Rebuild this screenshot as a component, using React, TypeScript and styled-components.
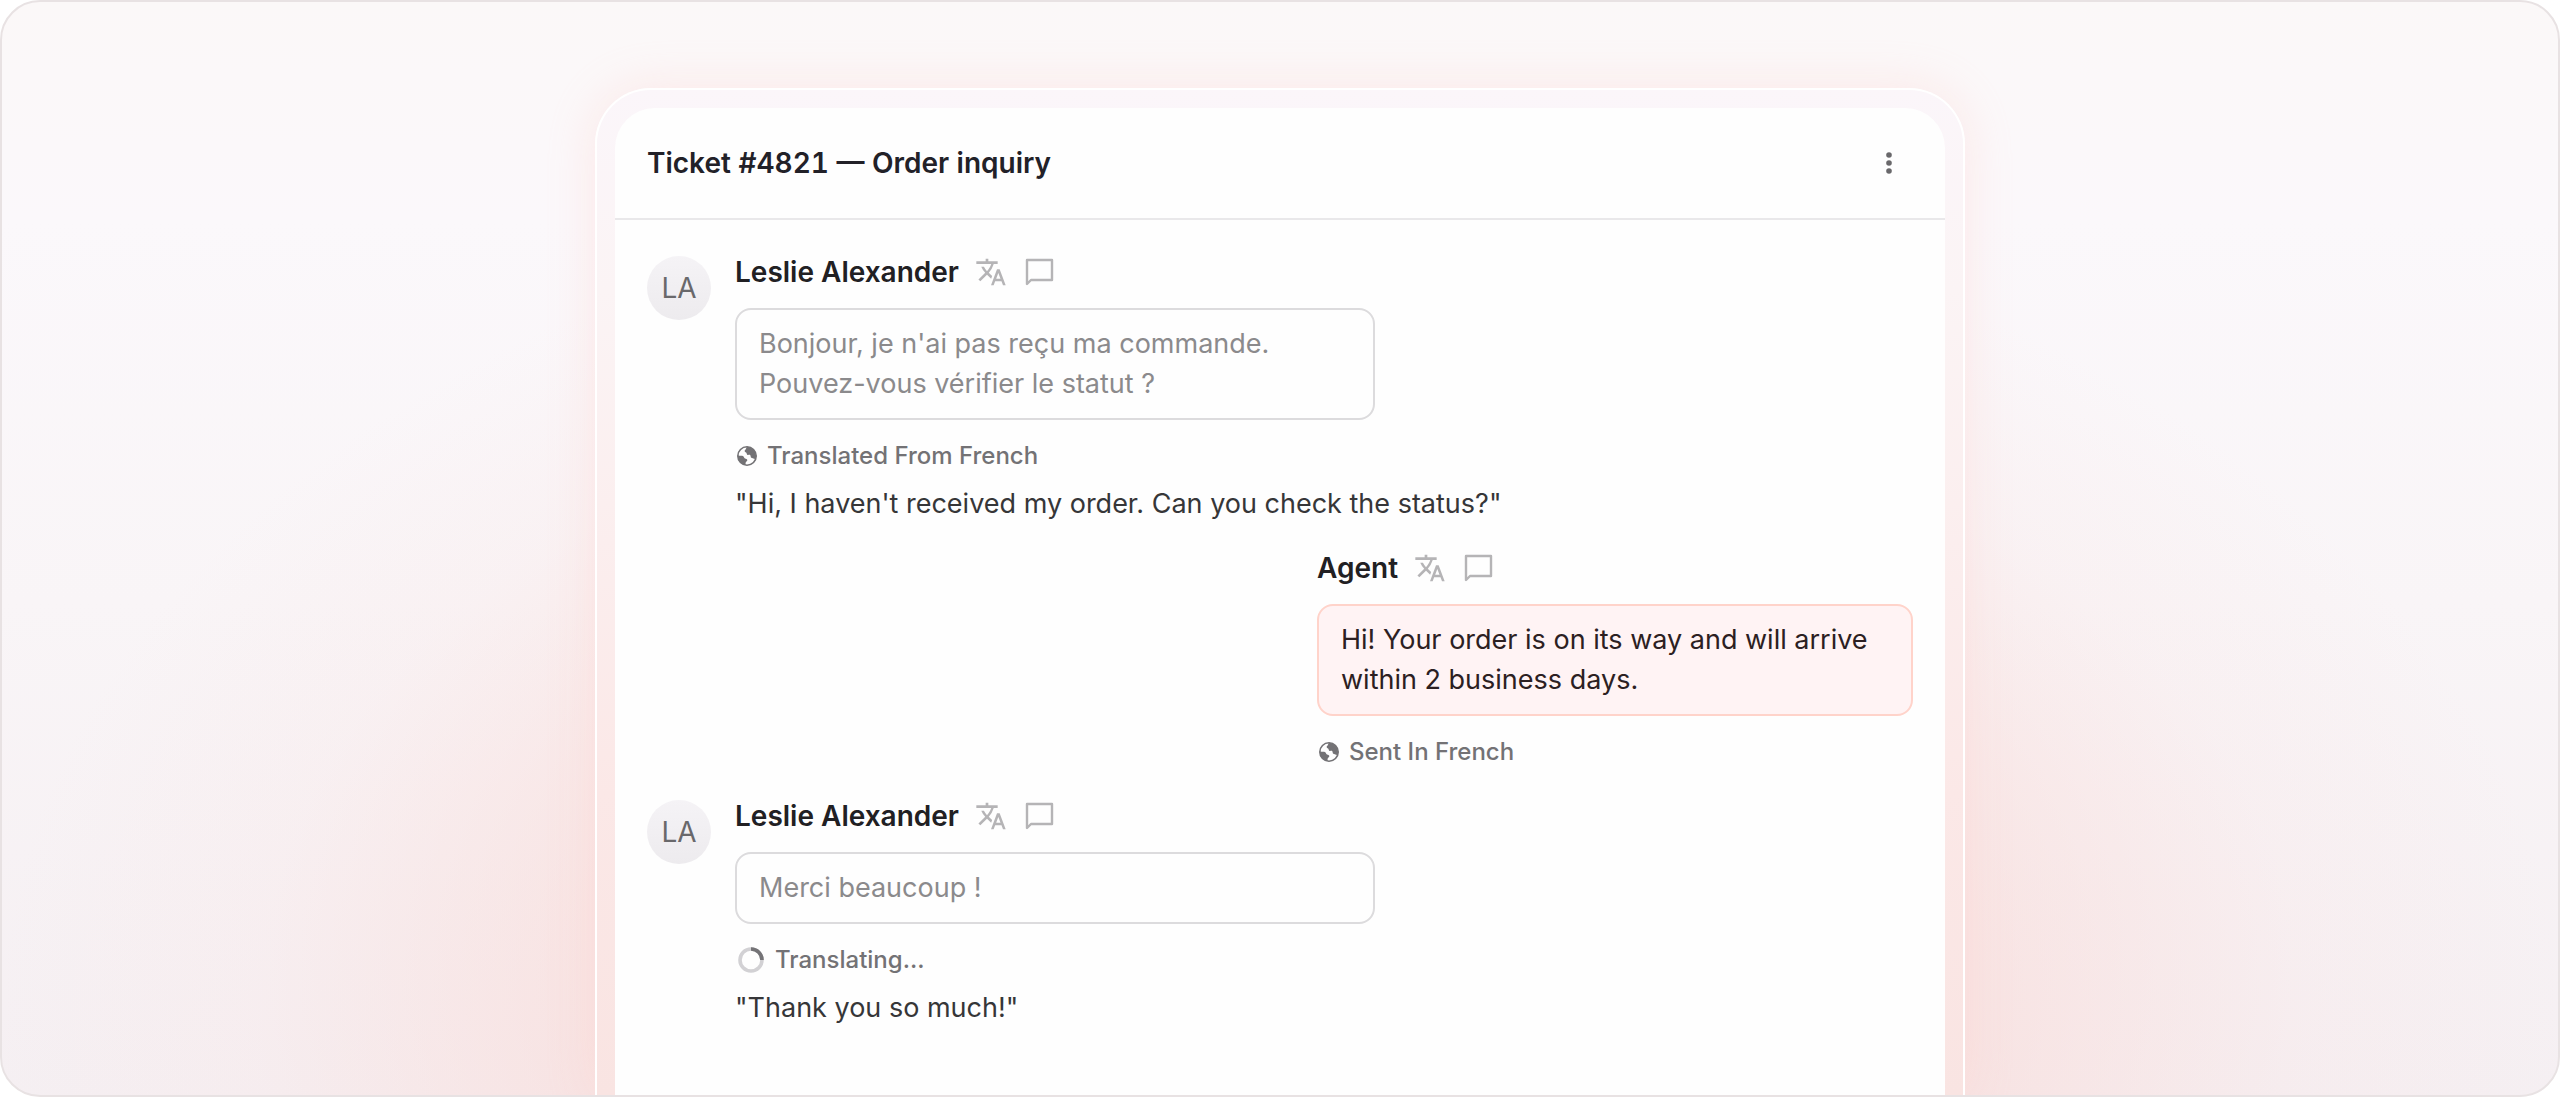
import React from "react";
import styled, { createGlobalStyle, css } from "styled-components";

const GlobalStyle = createGlobalStyle`
  *, *::before, *::after { box-sizing: border-box; }
  body {
    margin: 0;
    background: #ffffff;
    font-family: Inter, "Liberation Sans", sans-serif;
    font-size: 27px;
    line-height: 40px;
    color: #363638;
  }
  h1, h2, p { margin: 0; font: inherit; }
`;

const Page = styled.div`
  min-height: 100vh;
  padding-bottom: 1px;
  display: flex;
`;

const Stage = styled.main`
  flex: 1;
  display: flex;
  justify-content: center;
  align-items: stretch;
  padding: 86px 32px 0;
  border: 2px solid #e8e2e3;
  border-radius: 40px;
  overflow: hidden;
  background:
    radial-gradient(ellipse 50% 76% at 50% 92%, rgba(250, 208, 204, 0.7) 0%, rgba(250, 214, 210, 0.55) 50%, rgba(250, 226, 225, 0.2) 80%, rgba(250, 230, 230, 0) 100%),
    linear-gradient(180deg, #fbf8f8 0%, #fbf8fb 20%, #f9f5f7 55%, #f5eff2 100%);
`;

const Glass = styled.div`
  flex: 0 1 1370px;
  min-width: 0;
  display: flex;
  padding: 18px 18px 0;
  border: 2px solid #ffffff;
  border-bottom: 0;
  border-radius: 56px 56px 0 0;
  background: linear-gradient(180deg, #fbf6fa 0%, #fbf4f5 20%, #fbe8e7 70%, #f9e4e2 100%);
  box-shadow: 0 0 48px rgba(255, 210, 206, 0.45);
`;

const Card = styled.section`
  flex: 1;
  min-width: 0;
  border-radius: 40px 40px 0 0;
  background: #fefefe;
`;

const Header = styled.header`
  display: flex;
  align-items: center;
  justify-content: space-between;
  height: 112px;
  padding: 0 32px;
  border-bottom: 2px solid #e9e8ea;
`;

const Title = styled.h1`
  font-size: 28px;
  font-weight: 600;
  font-variant-numeric: tabular-nums;
  color: #222128;
`;

const iconReset = css`
  display: grid;
  place-items: center;
  padding: 0;
  border: 0;
  background: none;
  cursor: pointer;
`;

const MenuButton = styled.button`
  ${iconReset}
  width: 48px;
  height: 48px;
  color: #69686b;
`;

const Thread = styled.div`
  display: flex;
  flex-direction: column;
  gap: 24px;
  padding: 32px;
`;

const Message = styled.article<{ $own?: boolean }>`
  display: flex;
  gap: 24px;
  justify-content: ${(p) => (p.$own ? "flex-end" : "flex-start")};
`;

const Avatar = styled.div`
  flex: none;
  display: grid;
  place-items: center;
  width: 64px;
  height: 64px;
  margin-top: 4px;
  border-radius: 50%;
  background: linear-gradient(180deg, #f5f3f6, #edebee);
  font-size: 28px;
  color: #69686b;
`;

const Content = styled.div`
  min-width: 0;
`;

const Author = styled.div`
  display: flex;
  align-items: center;
  gap: 16px;
  margin-bottom: 16px;
`;

const Name = styled.h2`
  font-size: 28px;
  font-weight: 600;
  color: #212023;
`;

const ActionButton = styled.button`
  ${iconReset}
  width: 32px;
  height: 32px;
  color: #b5b4b6;
`;

const Bubble = styled.p<{ $own?: boolean }>`
  width: ${(p) => (p.$own ? "596px" : "640px")};
  max-width: 100%;
  padding: 14px 22px;
  border: 2px solid ${(p) => (p.$own ? "#ffd3ca" : "#dcdbdd")};
  border-radius: 16px;
  background: ${(p) => (p.$own ? "#fff3f4" : "#fefefe")};
  color: ${(p) => (p.$own ? "#2c2022" : "#8b8a8c")};
`;

const Status = styled.div`
  display: flex;
  align-items: center;
  gap: 8px;
  margin-top: 16px;
  font-size: 24px;
  font-weight: 500;
  color: #737275;
`;

const Translation = styled.p`
  margin-top: 8px;
`;

const TranslateIcon = () => (
  <svg width="32" height="32" viewBox="0 0 24 24" fill="currentColor" aria-hidden="true">
    <path d="M12.87 15.07l-2.54-2.51.03-.03A17.52 17.52 0 0 0 14.07 6H17V4h-7V2H8v2H1v1.99h11.17C11.5 7.92 10.44 9.75 9 11.35 8.07 10.32 7.3 9.19 6.69 8h-2c.73 1.63 1.73 3.17 2.98 4.56l-5.09 5.02L4 19l5-5 3.11 3.11.76-2.04zM18.5 10h-2L12 22h2l1.12-3h4.75L21 22h2l-4.5-12zm-2.62 7l1.62-4.33L19.12 17h-3.24z" />
  </svg>
);

const CommentIcon = () => (
  <svg width="32" height="32" viewBox="0 0 32 32" fill="none" stroke="currentColor" strokeWidth="2.4" strokeLinejoin="round" aria-hidden="true">
    <path d="M4 4h25v20H8l-4 4z" />
  </svg>
);

const GlobeIcon = () => (
  <svg width="24" height="24" viewBox="0 0 24 24" fill="none" aria-hidden="true">
    <circle cx="12" cy="12" r="9.2" stroke="currentColor" strokeWidth="1.6" />
    <path
      d="M12 2.8c-.9.8-.6 1.7-1.4 2.6-.8.9-1.2 1.200-.8 2.200.3.8 1.300.6 1.700 1.400.4.9.3 1.900 1.300 2 .9.1 1.800-.5 2.500.2.7.8.1 2 1 2.600.9.6 2.200.2 2.800 1.200l1.400-.4c.4-.8.700-1.700.7-2.600a9.200 9.200 0 0 0-9.200-9.200zM2.800 11.300l1.600.4c1.200.3 2.200-.2 3.400.3 1.400.6 1.100 1.900 2.200 2.400 1 .5 2.200.5 2.300 1.600.1 1.100-1.100 1.400-1.500 2.300-.4.9 0 1.800-.5 2.800a9.200 9.200 0 0 1-7.500-9.800z"
      fill="currentColor"
    />
  </svg>
);

const MoreIcon = () => (
  <svg width="32" height="32" viewBox="0 0 32 32" fill="currentColor" aria-hidden="true">
    <circle cx="16" cy="8" r="2.8" />
    <circle cx="16" cy="16" r="2.8" />
    <circle cx="16" cy="24" r="2.8" />
  </svg>
);

const Spinner = () => (
  <svg width="32" height="32" viewBox="0 0 32 32" fill="none" strokeWidth="3.600" aria-hidden="true">
    <circle cx="16" cy="16" r="11" stroke="#d2d1d4" />
    <path d="M16 5a11 11 0 0 1 11 11" stroke="#747376" />
  </svg>
);

type Entry = {
  author: string;
  initials?: string;
  lines: string[];
  icon: React.ReactNode;
  status: string;
  translation?: string;
};

const entries: Entry[] = [
  {
    author: "Leslie Alexander",
    initials: "LA",
    lines: ["Bonjour, je n'ai pas reçu ma commande.", "Pouvez-vous vérifier le statut ?"],
    icon: <GlobeIcon />,
    status: "Translated From French",
    translation: "\"Hi, I haven't received my order. Can you check the status?\"",
  },
  {
    author: "Agent",
    lines: ["Hi! Your order is on its way and will arrive", "within 2 business days."],
    icon: <GlobeIcon />,
    status: "Sent In French",
  },
  {
    author: "Leslie Alexander",
    initials: "LA",
    lines: ["Merci beaucoup !"],
    icon: <Spinner />,
    status: "Translating...",
    translation: "\"Thank you so much!\"",
  },
];

export default function App() {
  return (
    <Page>
      <GlobalStyle />
      <Stage>
        <Glass>
          <Card>
            <Header>
              <Title>Ticket #4821 — Order inquiry</Title>
              <MenuButton aria-label="More options">
                <MoreIcon />
              </MenuButton>
            </Header>
            <Thread>
              {entries.map((entry, i) => {
                const own = !entry.initials;
                return (
                  <Message key={i} $own={own}>
                    {entry.initials && <Avatar>{entry.initials}</Avatar>}
                    <Content>
                      <Author>
                        <Name>{entry.author}</Name>
                        <ActionButton aria-label="Translate">
                          <TranslateIcon />
                        </ActionButton>
                        <ActionButton aria-label="Comment">
                          <CommentIcon />
                        </ActionButton>
                      </Author>
                      <Bubble $own={own}>
                        {entry.lines.map((line, n) => (
                          <React.Fragment key={n}>
                            {n > 0 && <br />}
                            {line}
                          </React.Fragment>
                        ))}
                      </Bubble>
                      <Status>
                        {entry.icon}
                        <span>{entry.status}</span>
                      </Status>
                      {entry.translation && <Translation>{entry.translation}</Translation>}
                    </Content>
                  </Message>
                );
              })}
            </Thread>
          </Card>
        </Glass>
      </Stage>
    </Page>
  );
}
